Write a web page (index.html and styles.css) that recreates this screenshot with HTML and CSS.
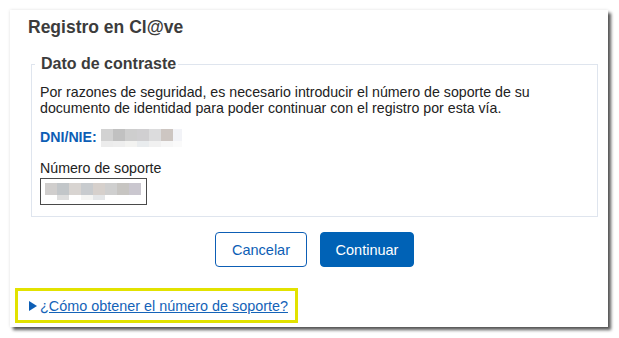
FILE: index.html
```html
<!DOCTYPE html>
<html lang="es">
<head>
  <meta charset="UTF-8">
  <title>Registro en Cl@ve</title>
  <link rel="stylesheet" href="styles.css">
</head>
<body>

  <div class="panel">
    <h1 class="panel-title">Registro en Cl@ve</h1>

    <!-- Dato de contraste -->
    <fieldset class="contrast">
      <legend>Dato de contraste</legend>
      <p class="intro">Por razones de seguridad, es necesario introducir el número de soporte de su documento de identidad para poder continuar con el registro por esta vía.</p>

      <div class="dni-row">
        <span class="dni-label">DNI/NIE:</span>
        <span class="blur blur-dni"></span>
      </div>

      <label class="field-label" for="soporte">Número de soporte</label>
      <div class="field-box" id="soporte">
        <span class="blur blur-input"></span>
      </div>
    </fieldset>

    <div class="actions">
      <button type="button" class="btn btn-outline">Cancelar</button>
      <button type="button" class="btn btn-primary">Continuar</button>
    </div>

    <div class="help-box">
      <svg class="arrow" width="8" height="10" viewBox="0 0 8 10"><path d="M0 0 L8 5 L0 10 Z" fill="#0d5eb5"/></svg>
      <a href="#" class="help-link">¿Cómo obtener el número de soporte?</a>
    </div>
  </div>

</body>
</html>
```

FILE: styles.css
```css
* {
  box-sizing: border-box;
  margin: 0;
  padding: 0;
}

body {
  font-family: "Liberation Sans", Arial, sans-serif;
  background-color: #fff;
  color: #222;
}

.panel {
  width: 598px;
  height: 317px;
  margin: 10px;
  padding-top: 6px;
  background-color: #fff;
  box-shadow: 3px 3px 3px rgba(0, 0, 0, 0.65), 0 0 3px rgba(0, 0, 0, 0.12);
}

.panel-title {
  font-size: 17.5px;
  line-height: 22px;
  font-weight: bold;
  color: #3c3c3c;
  padding-left: 18px;
}

.contrast {
  margin: 17px 10px 0 21px;
  padding: 0 8px 11px 8px;
  border: 1px solid #dfe5ee;
  min-width: 0;
}

.contrast legend {
  font-size: 16px;
  line-height: 18px;
  font-weight: bold;
  color: #3c3c3c;
  margin-left: -5px;
  padding: 0 2px 0 6px;
}

.intro {
  font-size: 14.2px;
  line-height: 16px;
  margin-top: 11px;
}

.dni-row {
  display: flex;
  align-items: center;
  margin-top: 13px;
  height: 16px;
}

.dni-label {
  font-size: 14.2px;
  font-weight: bold;
  color: #0d5eb5;
  margin-right: 4px;
}

.blur {
  display: block;
}

.blur-dni {
  width: 81px;
  height: 18px;
  margin-top: 2px;
  background:
    linear-gradient(to right, #d2d2d2 0 12px, #c1c1c1 12px 24px, #cecece 24px 36px, #d0cfd1 36px 48px, #dcdcdd 48px 60px, #cdc6c2 60px 72px, #f2f3f7 72px) top / 100% 12px no-repeat,
    linear-gradient(to right, #ececec 0 12px, #eeeeee 12px 24px, #f3f3f1 24px 36px, #e9ecee 36px 48px, #f1f1f1 48px 60px, #f6f6f6 60px 72px, #fafafa 72px) bottom / 100% 6px no-repeat;
}

.field-label {
  display: block;
  font-size: 14.2px;
  line-height: 16px;
  margin-top: 15px;
}

.field-box {
  width: 107px;
  height: 27px;
  margin-top: 2px;
  border: 1px solid #4a4a4a;
  padding: 4px 0 0 4px;
}

.blur-input {
  width: 96px;
  height: 17px;
  background:
    linear-gradient(to right, #d0cecd 0 12px, #c2c6c9 12px 24px, #d8d4d1 24px 36px, #c8cbce 36px 48px, #d6d0cc 48px 60px, #cfcfcf 60px 72px, #c7c5c2 72px 84px, #cac7cf 84px) top / 100% 12px no-repeat,
    linear-gradient(to right, #fff 0 12px, #dedede 12px 24px, #fff 24px 36px, #f5f5f3 36px 48px, #e4e6e8 48px 60px, #fff 60px) bottom / 100% 5px no-repeat;
}

.actions {
  display: flex;
  justify-content: center;
  gap: 13px;
  margin: 15px 10px 0 21px;
}

.btn {
  height: 35px;
  font-family: inherit;
  font-size: 14.5px;
  border-radius: 4px;
  cursor: pointer;
}

.btn-outline {
  width: 92px;
  background-color: #fff;
  color: #0d5eb5;
  border: 1px solid #0d5eb5;
}

.btn-primary {
  width: 94px;
  background-color: #0062b6;
  color: #fff;
  border: 1px solid #0062b6;
}

.help-box {
  display: flex;
  align-items: center;
  width: 283px;
  height: 35px;
  margin: 21px 0 0 5px;
  padding-left: 11px;
  border: 3px solid #e2e200;
}

.arrow {
  display: block;
  margin: 0 3px 0 0;
}

.help-link {
  font-size: 14.4px;
  color: #1463b8;
  text-decoration: underline;
}
```
